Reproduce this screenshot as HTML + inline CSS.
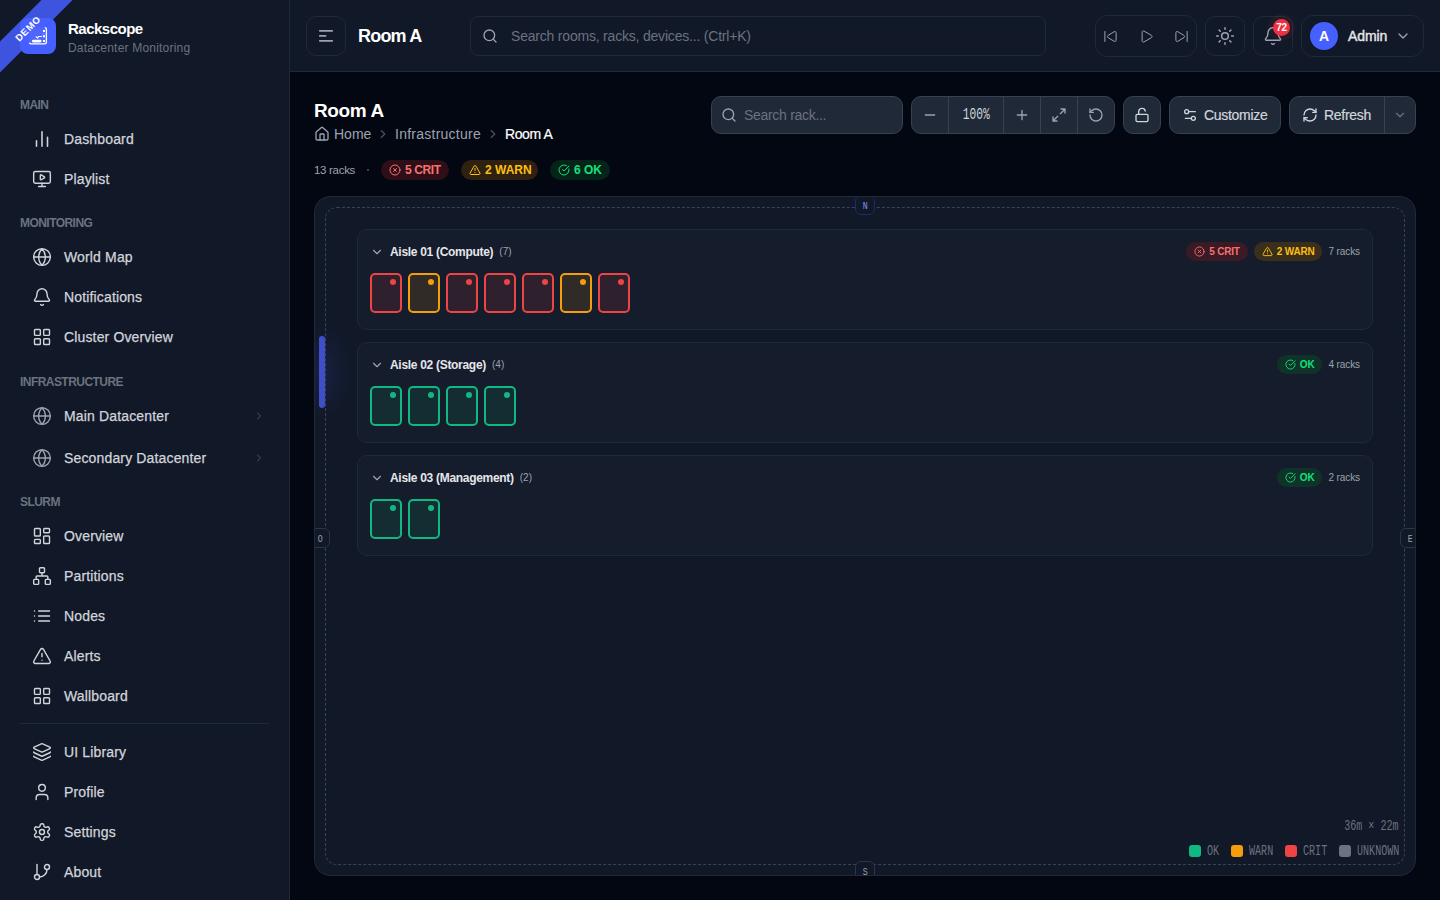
<!DOCTYPE html>
<html><head><meta charset="utf-8">
<style>
*{box-sizing:border-box;margin:0;padding:0}
html,body{width:1440px;height:900px;overflow:hidden;background:#030712;font-family:"Liberation Sans",sans-serif;color:#d1d5db}
.abs{position:absolute}
svg{display:block;fill:none;stroke:currentColor;stroke-linecap:round;stroke-linejoin:round}
#sb{position:absolute;left:0;top:0;width:290px;height:900px;background:#111827;border-right:1px solid #1f2937;overflow:hidden}
#hd{position:absolute;left:290px;top:0;width:1150px;height:72px;background:#111827;border-bottom:1px solid #1f2937}
.sec{position:absolute;left:20px;height:16px;line-height:16px;font-size:12px;font-weight:bold;color:#6b7280;letter-spacing:-0.55px}
.it{position:absolute;left:20px;width:249px;height:40px;display:flex;align-items:center;font-size:14px;color:#d1d5db}
.it svg{position:absolute;left:12px;width:20px;height:20px;stroke-width:1.7}
.it span{position:absolute;left:44px;line-height:20px;top:10px;-webkit-text-stroke:0.25px currentColor;letter-spacing:0.15px}
.btn{position:absolute;border:1px solid #1f2937;border-radius:10px}
.tb{position:absolute;background:#1f2937;border:1px solid #374151;border-radius:10px}
.mono{font-family:"Liberation Mono",monospace}
</style></head><body>

<!-- SIDEBAR -->
<div id="sb">
  <!-- logo -->
  <div class="abs" style="left:20px;top:18px;width:36px;height:36px;border-radius:8px;background:#465fff"></div>
  
  <div class="abs" style="left:68px;top:19px;font-size:15px;font-weight:bold;color:#fff;line-height:20px;letter-spacing:-0.5px">Rackscope</div>
  <div class="abs" style="left:68px;top:40px;font-size:12px;color:#6b7280;line-height:16px;letter-spacing:0.2px">Datacenter Monitoring</div>
  <!-- ribbon -->
  <div class="abs" style="left:-42px;top:18px;width:140px;height:22px;background:rgba(70,95,255,0.85);transform:rotate(-45deg);color:#fff;font-size:9.5px;font-weight:bold;text-align:center;line-height:22px;letter-spacing:0.8px;text-indent:0.8px">DEMO</div>
  <svg class="abs" style="left:20px;top:18px;width:36px;height:36px;color:#fff" viewBox="0 0 36 36"><rect x="9.5" y="9.5" width="16.5" height="16.5" fill="rgba(255,255,255,0.05)" stroke="none"/><path d="M25.3 9.6Q26.4 9.9 26.4 11.2V24.3Q26.4 25.9 24.8 25.9H11.2Q9.9 25.9 9.6 25.1" stroke-width="1.3"/><rect x="23" y="12" width="2" height="2" fill="#fff" stroke="none"/><rect x="23" y="17.2" width="2" height="2.1" fill="#fff" stroke="none"/><rect x="23" y="22" width="2" height="2" fill="#fff" stroke="none"/><rect x="11.9" y="21.7" width="9.6" height="2.7" rx="1.35" fill="#fff" stroke="none"/><path d="M16.1 18.8L17.7 20.1L18.5 18.5H21.5" stroke-width="1.1"/><path d="M22.4 16.5L23.7 15.2" stroke-width="0.8" stroke-opacity="0.4"/></svg>

  <div class="sec" style="top:97px">MAIN</div>
  <div class="it" style="top:119px"><svg viewBox="0 0 24 24" style="left:11px;width:22px;height:22px"><path d="M18 20V10M12 20V4M6 20v-6"/></svg><span>Dashboard</span></div>
  <div class="it" style="top:159px"><svg viewBox="0 0 24 24"><path d="M10 7.75a.75.75 0 0 1 1.142-.638l3.664 2.249a.75.75 0 0 1 0 1.278l-3.664 2.25a.75.75 0 0 1-1.142-.64z"/><path d="M12 17v4M8 21h8"/><rect x="2" y="3" width="20" height="14" rx="2"/></svg><span>Playlist</span></div>

  <div class="sec" style="top:215px">MONITORING</div>
  <div class="it" style="top:237px"><svg viewBox="0 0 24 24"><circle cx="12" cy="12" r="10"/><path d="M12 2a14.5 14.5 0 0 0 0 20 14.5 14.5 0 0 0 0-20M2 12h20"/></svg><span>World Map</span></div>
  <div class="it" style="top:277px"><svg viewBox="0 0 24 24"><path d="M10.268 21a2 2 0 0 0 3.464 0"/><path d="M3.262 15.326A1 1 0 0 0 4 17h16a1 1 0 0 0 .74-1.673C19.41 13.956 18 12.499 18 8A6 6 0 0 0 6 8c0 4.499-1.411 5.956-2.738 7.326"/></svg><span>Notifications</span></div>
  <div class="it" style="top:317px"><svg viewBox="0 0 24 24"><rect width="7" height="7" x="3" y="3" rx="1"/><rect width="7" height="7" x="14" y="3" rx="1"/><rect width="7" height="7" x="14" y="14" rx="1"/><rect width="7" height="7" x="3" y="14" rx="1"/></svg><span>Cluster Overview</span></div>

  <div class="sec" style="top:374px">INFRASTRUCTURE</div>
  <div class="it" style="top:396px"><svg viewBox="0 0 24 24" style="color:#9ca3af"><circle cx="12" cy="12" r="10"/><path d="M12 2a14.5 14.5 0 0 0 0 20 14.5 14.5 0 0 0 0-20M2 12h20"/></svg><span>Main Datacenter</span><svg viewBox="0 0 24 24" style="left:233px;width:12px;height:12px;color:#4b5563;stroke-width:2"><path d="m9 18 6-6-6-6"/></svg></div>
  <div class="it" style="top:438px"><svg viewBox="0 0 24 24" style="color:#9ca3af"><circle cx="12" cy="12" r="10"/><path d="M12 2a14.5 14.5 0 0 0 0 20 14.5 14.5 0 0 0 0-20M2 12h20"/></svg><span>Secondary Datacenter</span><svg viewBox="0 0 24 24" style="left:233px;width:12px;height:12px;color:#4b5563;stroke-width:2"><path d="m9 18 6-6-6-6"/></svg></div>

  <div class="sec" style="top:494px">SLURM</div>
  <div class="it" style="top:516px"><svg viewBox="0 0 24 24"><rect width="7" height="9" x="3" y="3" rx="1"/><rect width="7" height="5" x="14" y="3" rx="1"/><rect width="7" height="9" x="14" y="12" rx="1"/><rect width="7" height="5" x="3" y="16" rx="1"/></svg><span>Overview</span></div>
  <div class="it" style="top:556px"><svg viewBox="0 0 24 24"><rect x="16" y="16" width="6" height="6" rx="1"/><rect x="2" y="16" width="6" height="6" rx="1"/><rect x="9" y="2" width="6" height="6" rx="1"/><path d="M5 16v-3a1 1 0 0 1 1-1h12a1 1 0 0 1 1 1v3M12 12V8"/></svg><span>Partitions</span></div>
  <div class="it" style="top:596px"><svg viewBox="0 0 24 24"><path d="M3 12h.01M3 18h.01M3 6h.01M8 12h13M8 18h13M8 6h13"/></svg><span>Nodes</span></div>
  <div class="it" style="top:636px"><svg viewBox="0 0 24 24"><path d="m21.73 18-8-14a2 2 0 0 0-3.48 0l-8 14A2 2 0 0 0 4 21h16a2 2 0 0 0 1.73-3"/><path d="M12 9v4M12 17h.01"/></svg><span>Alerts</span></div>
  <div class="it" style="top:676px"><svg viewBox="0 0 24 24"><rect width="7" height="7" x="3" y="3" rx="1"/><rect width="7" height="7" x="14" y="3" rx="1"/><rect width="7" height="7" x="14" y="14" rx="1"/><rect width="7" height="7" x="3" y="14" rx="1"/></svg><span>Wallboard</span></div>

  <div class="abs" style="left:20px;top:723px;width:249px;height:1px;background:#1f2937"></div>

  <div class="it" style="top:732px"><svg viewBox="0 0 24 24"><path d="M12.83 2.18a2 2 0 0 0-1.66 0L2.6 6.08a1 1 0 0 0 0 1.83l8.58 3.91a2 2 0 0 0 1.66 0l8.58-3.9a1 1 0 0 0 0-1.83z"/><path d="M2 12a1 1 0 0 0 .58.91l8.6 3.91a2 2 0 0 0 1.65 0l8.58-3.9A1 1 0 0 0 22 12"/><path d="M2 17a1 1 0 0 0 .58.91l8.6 3.91a2 2 0 0 0 1.65 0l8.58-3.9A1 1 0 0 0 22 17"/></svg><span>UI Library</span></div>
  <div class="it" style="top:772px"><svg viewBox="0 0 24 24"><path d="M19 21v-2a4 4 0 0 0-4-4H9a4 4 0 0 0-4 4v2"/><circle cx="12" cy="7" r="4"/></svg><span>Profile</span></div>
  <div class="it" style="top:812px"><svg viewBox="0 0 24 24"><path d="M12.22 2h-.44a2 2 0 0 0-2 2v.18a2 2 0 0 1-1 1.73l-.43.25a2 2 0 0 1-2 0l-.15-.08a2 2 0 0 0-2.730.73l-.22.38a2 2 0 0 0 .73 2.73l.15.1a2 2 0 0 1 1 1.72v.51a2 2 0 0 1-1 1.74l-.15.09a2 2 0 0 0-.73 2.73l.22.38a2 2 0 0 0 2.73.73l.15-.08a2 2 0 0 1 2 0l.43.25a2 2 0 0 1 1 1.73V20a2 2 0 0 0 2 2h.44a2 2 0 0 0 2-2v-.18a2 2 0 0 1 1-1.73l.43-.25a2 2 0 0 1 2 0l.15.08a2 2 0 0 0 2.73-.73l.22-.39a2 2 0 0 0-.73-2.73l-.15-.08a2 2 0 0 1-1-1.74v-.5a2 2 0 0 1 1-1.74l.15-.09a2 2 0 0 0 .73-2.73l-.22-.38a2 2 0 0 0-2.73-.73l-.15.08a2 2 0 0 1-2 0l-.43-.25a2 2 0 0 1-1-1.73V4a2 2 0 0 0-2-2z"/><circle cx="12" cy="12" r="3"/></svg><span>Settings</span></div>
  <div class="it" style="top:852px"><svg viewBox="0 0 24 24"><path d="M6 3v12"/><circle cx="18" cy="6" r="3"/><circle cx="6" cy="18" r="3"/><path d="M18 9a9 9 0 0 1-9 9"/></svg><span>About</span></div>
</div>

<!-- HEADER -->
<div id="hd">
  <div class="btn" style="left:16px;top:16px;width:40px;height:40px"></div>
  <svg class="abs" style="left:27px;top:26px;width:20px;height:20px;color:#9ca3af;stroke-width:1.8" viewBox="0 0 20 20"><path d="M2.8 4.8h12.4M2.8 9.8h5.8M2.8 14.8h12.4"/></svg>
  <div class="abs" style="left:68px;top:25px;font-size:18px;line-height:22px;font-weight:bold;color:#fff;letter-spacing:-0.8px">Room A</div>
  <div class="btn" style="left:180px;top:16px;width:576px;height:40px;border-radius:8px"></div>
  <svg class="abs" style="left:192px;top:28px;width:16px;height:16px;color:#9ca3af;stroke-width:2" viewBox="0 0 24 24"><circle cx="11" cy="11" r="8"/><path d="m21 21-4.3-4.3"/></svg>
  <div class="abs" style="left:221px;top:26px;font-size:14px;line-height:20px;color:#6b7280;letter-spacing:-0.2px">Search rooms, racks, devices... (Ctrl+K)</div>

  <div class="btn" style="left:805px;top:15px;width:102px;height:42px;border-radius:12px"></div>
  <svg class="abs" style="left:813.2px;top:28.8px;width:15px;height:15px;color:#9ca3af;stroke-width:1.6" viewBox="0 0 24 24"><path d="M17.971 4.285A2 2 0 0 1 21 6v12a2 2 0 0 1-3.029 1.715l-9.997-5.998a2 2 0 0 1-.003-3.432z"/><path d="M3 20V4"/></svg>
  <svg class="abs" style="left:848.6px;top:28.8px;width:15px;height:15px;color:#9ca3af;stroke-width:1.6" viewBox="0 0 24 24"><path d="M5 5a2 2 0 0 1 3.008-1.728l11.997 6.998a2 2 0 0 1 .003 3.458l-12 7A2 2 0 0 1 5 19z"/></svg>
  <svg class="abs" style="left:883.5px;top:28.8px;width:15px;height:15px;color:#9ca3af;stroke-width:1.6" viewBox="0 0 24 24"><path d="M21 4v16"/><path d="M6.029 4.285A2 2 0 0 0 3 6v12a2 2 0 0 0 3.029 1.715l9.997-5.998a2 2 0 0 0 .003-3.432z"/></svg>

  <div class="btn" style="left:915px;top:16px;width:40px;height:40px"></div>
  <svg class="abs" style="left:925px;top:26px;width:20px;height:20px;color:#9ca3af;stroke-width:1.8" viewBox="0 0 24 24"><circle cx="12" cy="12" r="4"/><path d="M12 2v2M12 20v2m-7.07-17.07 1.41 1.41m11.32 11.32 1.41 1.41M2 12h2m16 0h2M6.34 17.66l-1.41 1.41M19.07 4.93l-1.41 1.41"/></svg>

  <div class="btn" style="left:963px;top:16px;width:40px;height:40px"></div>
  <svg class="abs" style="left:973px;top:26px;width:20px;height:20px;color:#9ca3af;stroke-width:1.7" viewBox="0 0 24 24"><path d="M10.268 21a2 2 0 0 0 3.464 0"/><path d="M3.262 15.326A1 1 0 0 0 4 17h16a1 1 0 0 0 .74-1.673C19.41 13.956 18 12.499 18 8A6 6 0 0 0 6 8c0 4.499-1.411 5.956-2.738 7.326"/></svg>
  <div class="abs" style="left:978px;top:13.5px;width:27px;height:27px;border-radius:50%;background:rgba(240,68,56,0.07)"></div>
  <div class="abs" style="left:983px;top:18.5px;width:17px;height:17px;border-radius:50%;background:#f0303f;color:#fff;font-size:10px;font-weight:bold;line-height:17px;text-align:center;letter-spacing:-0.3px">72</div>

  <div class="btn" style="left:1011px;top:15px;width:123px;height:42px;border-radius:12px"></div>
  <div class="abs" style="left:1020px;top:22px;width:28px;height:28px;border-radius:50%;background:#465fff;color:#fff;font-size:14px;font-weight:bold;line-height:28px;text-align:center">A</div>
  <div class="abs" style="left:1058px;top:26px;font-size:14px;line-height:20px;color:#e5e7eb;letter-spacing:-0.1px;-webkit-text-stroke:0.4px currentColor">Admin</div>
  <svg class="abs" style="left:1105px;top:28px;width:16px;height:16px;color:#9ca3af;stroke-width:2" viewBox="0 0 24 24"><path d="m6 9 6 6 6-6"/></svg>
</div>

<!-- MAIN -->
<div class="abs" style="left:314px;top:99.5px;font-size:19px;line-height:22px;font-weight:bold;color:#fff;letter-spacing:-0.4px">Room A</div>
<svg class="abs" style="left:314px;top:126px;width:16px;height:16px;color:#9ca3af;stroke-width:2" viewBox="0 0 24 24"><path d="M15 21v-8a1 1 0 0 0-1-1h-4a1 1 0 0 0-1 1v8"/><path d="M3 10a2 2 0 0 1 .709-1.528l7-5.999a2 2 0 0 1 2.582 0l7 5.999A2 2 0 0 1 21 10v9a2 2 0 0 1-2 2H5a2 2 0 0 1-2-2z"/></svg>
<div class="abs" style="left:334px;top:124px;font-size:14px;line-height:20px;color:#9ca3af">Home</div>
<svg class="abs" style="left:376px;top:127px;width:14px;height:14px;color:#4b5563;stroke-width:2" viewBox="0 0 24 24"><path d="m9 18 6-6-6-6"/></svg>
<div class="abs" style="left:395px;top:124px;font-size:14px;line-height:20px;color:#9ca3af;letter-spacing:0.25px">Infrastructure</div>
<svg class="abs" style="left:486px;top:127px;width:14px;height:14px;color:#4b5563;stroke-width:2" viewBox="0 0 24 24"><path d="m9 18 6-6-6-6"/></svg>
<div class="abs" style="left:505px;top:124px;font-size:14px;line-height:20px;color:#fff;letter-spacing:-0.4px;-webkit-text-stroke:0.2px currentColor">Room A</div>

<div class="abs" style="left:314px;top:162px;font-size:11.5px;line-height:16px;color:#9ca3af;letter-spacing:-0.3px">13 racks</div>
<div class="abs" style="left:367px;top:169px;width:2px;height:2px;border-radius:1px;background:#4b5563"></div>
<div class="abs" style="left:381px;top:160px;width:68px;height:20px;border-radius:10px;background:#2f0f17"></div>
<svg class="abs" style="left:389px;top:164px;width:12px;height:12px;color:#f87171;stroke-width:2" viewBox="0 0 24 24"><circle cx="12" cy="12" r="10"/><path d="m15 9-6 6m0-6 6 6"/></svg>
<div class="abs" style="left:405px;top:162px;font-size:12px;line-height:16px;font-weight:bold;color:#f87171;letter-spacing:-0.4px">5 CRIT</div>
<div class="abs" style="left:461px;top:160px;width:77px;height:20px;border-radius:10px;background:#2e2111"></div>
<svg class="abs" style="left:469px;top:164px;width:12px;height:12px;color:#fdbf0f;stroke-width:2" viewBox="0 0 24 24"><path d="m21.73 18-8-14a2 2 0 0 0-3.48 0l-8 14A2 2 0 0 0 4 21h16a2 2 0 0 0 1.73-3"/><path d="M12 9v4M12 17h.01"/></svg>
<div class="abs" style="left:485px;top:162px;font-size:12px;line-height:16px;font-weight:bold;color:#fdbf0f">2 WARN</div>
<div class="abs" style="left:550px;top:160px;width:60px;height:20px;border-radius:10px;background:#06231a"></div>
<svg class="abs" style="left:558px;top:164px;width:12px;height:12px;color:#12e27a;stroke-width:2" viewBox="0 0 24 24"><path d="M21.801 10A10 10 0 1 1 17 3.335"/><path d="m9 11 3 3L22 4"/></svg>
<div class="abs" style="left:574px;top:162px;font-size:12px;line-height:16px;font-weight:bold;color:#12e27a">6 OK</div>

<!-- toolbar -->
<div class="tb" style="left:711px;top:96px;width:192px;height:38px"></div>
<svg class="abs" style="left:721px;top:107px;width:16px;height:16px;color:#9ca3af;stroke-width:2" viewBox="0 0 24 24"><circle cx="11" cy="11" r="8"/><path d="m21 21-4.3-4.3"/></svg>
<div class="abs" style="left:744px;top:105px;font-size:14px;line-height:20px;color:#6b7280;letter-spacing:-0.3px">Search rack...</div>

<div class="tb" style="left:911px;top:96px;width:204px;height:38px"></div>
<div class="abs" style="left:948px;top:97px;width:1px;height:36px;background:#374151"></div>
<div class="abs" style="left:1003px;top:97px;width:1px;height:36px;background:#374151"></div>
<div class="abs" style="left:1040px;top:97px;width:1px;height:36px;background:#374151"></div>
<div class="abs" style="left:1077px;top:97px;width:1px;height:36px;background:#374151"></div>
<svg class="abs" style="left:922px;top:107px;width:16px;height:16px;color:#9ca3af;stroke-width:2" viewBox="0 0 24 24"><path d="M5 12h14"/></svg>
<div class="abs mono" style="left:949px;top:105px;width:54px;text-align:center;font-size:16px;line-height:20px;color:#d1d5db"><span style="display:inline-block;transform:scaleX(0.7)">100%</span></div>
<svg class="abs" style="left:1014px;top:107px;width:16px;height:16px;color:#9ca3af;stroke-width:2" viewBox="0 0 24 24"><path d="M5 12h14M12 5v14"/></svg>
<svg class="abs" style="left:1051px;top:107px;width:16px;height:16px;color:#9ca3af;stroke-width:2" viewBox="0 0 24 24"><path d="M15 3h6v6M9 21H3v-6M21 3l-7 7M3 21l7-7"/></svg>
<svg class="abs" style="left:1088px;top:107px;width:16px;height:16px;color:#9ca3af;stroke-width:2" viewBox="0 0 24 24"><path d="M3 12a9 9 0 1 0 9-9 9.75 9.75 0 0 0-6.74 2.74L3 8"/><path d="M3 3v5h5"/></svg>

<div class="tb" style="left:1123px;top:96px;width:38px;height:38px"></div>
<svg class="abs" style="left:1134px;top:107px;width:16px;height:16px;color:#d1d5db;stroke-width:2" viewBox="0 0 24 24"><rect width="18" height="11" x="3" y="11" rx="2"/><path d="M7 11V7a5 5 0 0 1 9.9-1"/></svg>

<div class="tb" style="left:1169px;top:96px;width:112px;height:38px"></div>
<svg class="abs" style="left:1182px;top:107px;width:16px;height:16px;color:#d1d5db;stroke-width:2" viewBox="0 0 24 24"><path d="M20 7h-9M14 17H5"/><circle cx="17" cy="17" r="3"/><circle cx="7" cy="7" r="3"/></svg>
<div class="abs" style="left:1204px;top:105px;font-size:14px;line-height:20px;color:#d1d5db;letter-spacing:-0.3px;-webkit-text-stroke:0.2px currentColor">Customize</div>

<div class="tb" style="left:1289px;top:96px;width:127px;height:38px"></div>
<div class="abs" style="left:1384px;top:97px;width:1px;height:36px;background:#374151"></div>
<svg class="abs" style="left:1302px;top:107px;width:16px;height:16px;color:#d1d5db;stroke-width:2" viewBox="0 0 24 24"><path d="M3 12a9 9 0 0 1 9-9 9.75 9.75 0 0 1 6.74 2.74L21 8"/><path d="M21 3v5h-5"/><path d="M21 12a9 9 0 0 1-9 9 9.75 9.75 0 0 1-6.74-2.74L3 16"/><path d="M8 16H3v5"/></svg>
<div class="abs" style="left:1324px;top:105px;font-size:14px;line-height:20px;color:#d1d5db;letter-spacing:-0.3px;-webkit-text-stroke:0.2px currentColor">Refresh</div>
<svg class="abs" style="left:1393px;top:108px;width:14px;height:14px;color:#6b7280;stroke-width:2" viewBox="0 0 24 24"><path d="m6 9 6 6 6-6"/></svg>

<!-- room panel -->
<div id="room" class="abs" style="left:314px;top:196px;width:1102px;height:680px;border-radius:16px;background:#111827;border:1px solid #1f2937;overflow:hidden">
<div class="abs" style="left:-20px;top:120px;width:60px;height:110px;background:radial-gradient(ellipse 30px 50px at 27px 55px,rgba(70,95,255,0.12),rgba(70,95,255,0) 100%)"></div>
<div class="abs" style="left:4px;top:139px;width:6px;height:72px;border-radius:3px;background:#3e4fc9"></div>
<div class="abs" style="left:10px;top:10px;width:1080px;height:658px;border:1px dashed #394354;border-radius:12px"></div>
<div class="abs mono" style="left:540px;top:-2px;width:20px;height:20px;border:1px solid #1e2a6b;border-radius:6px;background:#111827;text-align:center;line-height:21px;font-size:11px;color:#8496f5"><span style="display:inline-block;transform:scaleX(0.75)">N</span></div>
<div class="abs mono" style="left:-5px;top:331px;width:20px;height:20px;border:1px solid #2b3544;border-radius:6px;background:#111827;text-align:center;line-height:21px;font-size:11px;color:#9ca3af"><span style="display:inline-block;transform:scaleX(0.75)">O</span></div>
<div class="abs mono" style="left:1085px;top:331px;width:20px;height:20px;border:1px solid #2b3544;border-radius:6px;background:#111827;text-align:center;line-height:21px;font-size:11px;color:#9ca3af"><span style="display:inline-block;transform:scaleX(0.75)">E</span></div>
<div class="abs mono" style="left:540px;top:664px;width:20px;height:20px;border:1px solid #2b3544;border-radius:6px;background:#111827;text-align:center;line-height:21px;font-size:11px;color:#9ca3af"><span style="display:inline-block;transform:scaleX(0.75)">S</span></div>
<div class="abs" style="left:42px;top:32px;width:1016px;height:101px;border:1px solid #1f2937;border-radius:10px;background:#151c2b">
<svg class="abs" viewBox="0 0 24 24" style="left:12px;top:15px;width:14px;height:14px;color:#9ca3af;stroke-width:2"><path d="m6 9 6 6 6-6"/></svg>
<div class="abs" style="left:32px;top:14px;font-size:12px;line-height:16px;font-weight:bold;color:#e5e7eb;letter-spacing:-0.3px;white-space:nowrap">Aisle 01 (Compute) <span style="font-weight:normal;font-size:10px;color:#9ca3af;margin-left:3px;letter-spacing:0;position:relative;top:-1px">(7)</span></div>
<div class="abs" style="right:12px;top:12px;display:flex;align-items:center;gap:6px"><div style="height:19px;border-radius:10px;background:#3a1a24;color:#f87171;display:flex;align-items:center;padding:0 8px;font-size:10px;font-weight:bold;letter-spacing:-0.2px"><svg viewBox="0 0 24 24" style="width:11px;height:11px;stroke-width:2;margin-right:4px"><circle cx="12" cy="12" r="10"/><path d="m15 9-6 6m0-6 6 6"/></svg>5 CRIT</div><div style="height:19px;border-radius:10px;background:#3a2e1c;color:#fdbf0f;display:flex;align-items:center;padding:0 8px;font-size:10px;font-weight:bold;letter-spacing:-0.2px"><svg viewBox="0 0 24 24" style="width:11px;height:11px;stroke-width:2;margin-right:4px"><path d="m21.73 18-8-14a2 2 0 0 0-3.48 0l-8 14A2 2 0 0 0 4 21h16a2 2 0 0 0 1.73-3"/><path d="M12 9v4M12 17h.01"/></svg>2 WARN</div><div style="font-size:10px;color:#9ca3af;letter-spacing:-0.1px">7 racks</div></div>
<div class="abs" style="left:12px;top:43px;width:32px;height:40px;border:2px solid #ef4444;border-radius:5px;background:#2f202d"><div class="abs" style="right:4px;top:4px;width:6px;height:6px;border-radius:50%;background:#ef4444"></div></div>
<div class="abs" style="left:50px;top:43px;width:32px;height:40px;border:2px solid #f59e0b;border-radius:5px;background:#302b26"><div class="abs" style="right:4px;top:4px;width:6px;height:6px;border-radius:50%;background:#f59e0b"></div></div>
<div class="abs" style="left:88px;top:43px;width:32px;height:40px;border:2px solid #ef4444;border-radius:5px;background:#2f202d"><div class="abs" style="right:4px;top:4px;width:6px;height:6px;border-radius:50%;background:#ef4444"></div></div>
<div class="abs" style="left:126px;top:43px;width:32px;height:40px;border:2px solid #ef4444;border-radius:5px;background:#2f202d"><div class="abs" style="right:4px;top:4px;width:6px;height:6px;border-radius:50%;background:#ef4444"></div></div>
<div class="abs" style="left:164px;top:43px;width:32px;height:40px;border:2px solid #ef4444;border-radius:5px;background:#2f202d"><div class="abs" style="right:4px;top:4px;width:6px;height:6px;border-radius:50%;background:#ef4444"></div></div>
<div class="abs" style="left:202px;top:43px;width:32px;height:40px;border:2px solid #f59e0b;border-radius:5px;background:#302b26"><div class="abs" style="right:4px;top:4px;width:6px;height:6px;border-radius:50%;background:#f59e0b"></div></div>
<div class="abs" style="left:240px;top:43px;width:32px;height:40px;border:2px solid #ef4444;border-radius:5px;background:#2f202d"><div class="abs" style="right:4px;top:4px;width:6px;height:6px;border-radius:50%;background:#ef4444"></div></div>
</div>
<div class="abs" style="left:42px;top:145px;width:1016px;height:101px;border:1px solid #1f2937;border-radius:10px;background:#151c2b">
<svg class="abs" viewBox="0 0 24 24" style="left:12px;top:15px;width:14px;height:14px;color:#9ca3af;stroke-width:2"><path d="m6 9 6 6 6-6"/></svg>
<div class="abs" style="left:32px;top:14px;font-size:12px;line-height:16px;font-weight:bold;color:#e5e7eb;letter-spacing:-0.3px;white-space:nowrap">Aisle 02 (Storage) <span style="font-weight:normal;font-size:10px;color:#9ca3af;margin-left:3px;letter-spacing:0;position:relative;top:-1px">(4)</span></div>
<div class="abs" style="right:12px;top:12px;display:flex;align-items:center;gap:6px"><div style="height:19px;border-radius:10px;background:#0f3328;color:#12e27a;display:flex;align-items:center;padding:0 8px;font-size:10px;font-weight:bold;letter-spacing:-0.2px"><svg viewBox="0 0 24 24" style="width:11px;height:11px;stroke-width:2;margin-right:4px"><path d="M21.801 10A10 10 0 1 1 17 3.335"/><path d="m9 11 3 3L22 4"/></svg>OK</div><div style="font-size:10px;color:#9ca3af;letter-spacing:-0.1px">4 racks</div></div>
<div class="abs" style="left:12px;top:43px;width:32px;height:40px;border:2px solid #10b981;border-radius:5px;background:#142d33"><div class="abs" style="right:4px;top:4px;width:6px;height:6px;border-radius:50%;background:#10b981"></div></div>
<div class="abs" style="left:50px;top:43px;width:32px;height:40px;border:2px solid #10b981;border-radius:5px;background:#142d33"><div class="abs" style="right:4px;top:4px;width:6px;height:6px;border-radius:50%;background:#10b981"></div></div>
<div class="abs" style="left:88px;top:43px;width:32px;height:40px;border:2px solid #10b981;border-radius:5px;background:#142d33"><div class="abs" style="right:4px;top:4px;width:6px;height:6px;border-radius:50%;background:#10b981"></div></div>
<div class="abs" style="left:126px;top:43px;width:32px;height:40px;border:2px solid #10b981;border-radius:5px;background:#142d33"><div class="abs" style="right:4px;top:4px;width:6px;height:6px;border-radius:50%;background:#10b981"></div></div>
</div>
<div class="abs" style="left:42px;top:258px;width:1016px;height:101px;border:1px solid #1f2937;border-radius:10px;background:#151c2b">
<svg class="abs" viewBox="0 0 24 24" style="left:12px;top:15px;width:14px;height:14px;color:#9ca3af;stroke-width:2"><path d="m6 9 6 6 6-6"/></svg>
<div class="abs" style="left:32px;top:14px;font-size:12px;line-height:16px;font-weight:bold;color:#e5e7eb;letter-spacing:-0.3px;white-space:nowrap">Aisle 03 (Management) <span style="font-weight:normal;font-size:10px;color:#9ca3af;margin-left:3px;letter-spacing:0;position:relative;top:-1px">(2)</span></div>
<div class="abs" style="right:12px;top:12px;display:flex;align-items:center;gap:6px"><div style="height:19px;border-radius:10px;background:#0f3328;color:#12e27a;display:flex;align-items:center;padding:0 8px;font-size:10px;font-weight:bold;letter-spacing:-0.2px"><svg viewBox="0 0 24 24" style="width:11px;height:11px;stroke-width:2;margin-right:4px"><path d="M21.801 10A10 10 0 1 1 17 3.335"/><path d="m9 11 3 3L22 4"/></svg>OK</div><div style="font-size:10px;color:#9ca3af;letter-spacing:-0.1px">2 racks</div></div>
<div class="abs" style="left:12px;top:43px;width:32px;height:40px;border:2px solid #10b981;border-radius:5px;background:#142d33"><div class="abs" style="right:4px;top:4px;width:6px;height:6px;border-radius:50%;background:#10b981"></div></div>
<div class="abs" style="left:50px;top:43px;width:32px;height:40px;border:2px solid #10b981;border-radius:5px;background:#142d33"><div class="abs" style="right:4px;top:4px;width:6px;height:6px;border-radius:50%;background:#10b981"></div></div>
</div>
<div class="abs mono" style="right:16px;top:621px;font-size:14px;line-height:16px;color:#6b7280;white-space:nowrap"><span style="display:inline-block;transform:scaleX(0.72);transform-origin:right center">36m × 22m</span></div>
<div class="abs" style="left:874px;top:648px;width:12px;height:12px;border-radius:3px;background:#10b981"></div>
<div class="abs mono" style="left:892px;top:646px;font-size:14px;line-height:16px;color:#6b7280;white-space:nowrap"><span style="display:inline-block;transform:scaleX(0.72);transform-origin:left center">OK</span></div>
<div class="abs" style="left:916px;top:648px;width:12px;height:12px;border-radius:3px;background:#f59e0b"></div>
<div class="abs mono" style="left:934px;top:646px;font-size:14px;line-height:16px;color:#6b7280;white-space:nowrap"><span style="display:inline-block;transform:scaleX(0.72);transform-origin:left center">WARN</span></div>
<div class="abs" style="left:970px;top:648px;width:12px;height:12px;border-radius:3px;background:#ef4444"></div>
<div class="abs mono" style="left:988px;top:646px;font-size:14px;line-height:16px;color:#6b7280;white-space:nowrap"><span style="display:inline-block;transform:scaleX(0.72);transform-origin:left center">CRIT</span></div>
<div class="abs" style="left:1024px;top:648px;width:12px;height:12px;border-radius:3px;background:#6b7280"></div>
<div class="abs mono" style="left:1042px;top:646px;font-size:14px;line-height:16px;color:#6b7280;white-space:nowrap"><span style="display:inline-block;transform:scaleX(0.72);transform-origin:left center">UNKNOWN</span></div>
</div>

</body></html>
